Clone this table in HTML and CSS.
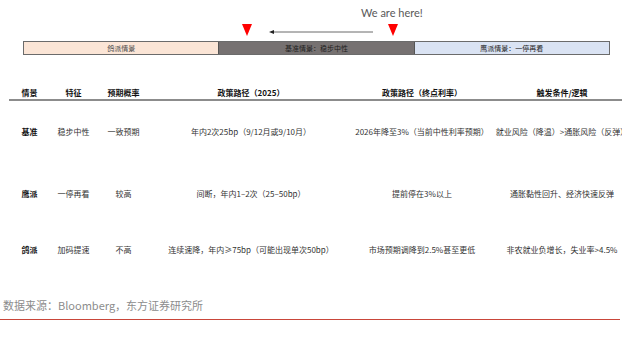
FILE: index.html
```html
<!DOCTYPE html>
<html lang="zh-CN">
<head>
<meta charset="utf-8">
<title>情景分析</title>
<link rel="stylesheet" href="styles.css">
</head>
<body>
<div class="page">
  <div class="here">We are here!</div>
  <div class="markers">
    <svg class="tri" width="10" height="12" viewBox="0 0 10 12"><polygon points="0,0 10,0 5,12" fill="#ff0000"/></svg>
    <svg class="arrow" width="105" height="14" viewBox="0 0 105 14"><line x1="4" y1="9" x2="104" y2="9" stroke="#6a6a6a" stroke-width="1"/><polygon points="0,9 5,7 5,11" fill="#222"/></svg>
    <svg class="tri tri2" width="10" height="12" viewBox="0 0 10 12"><polygon points="0,0 10,0 5,12" fill="#ff0000"/></svg>
  </div>
  <div class="bar">
    <div class="seg dove">鸽派情景</div>
    <div class="seg base">基准情景：稳步中性</div>
    <div class="seg hawk">鹰派情景：一停再看</div>
  </div>
  <div class="table">
    <div class="cell head">情景</div>
    <div class="cell head">特征</div>
    <div class="cell head">预期概率</div>
    <div class="cell head">政策路径（2025）</div>
    <div class="cell head">政策路径（终点利率）</div>
    <div class="cell head">触发条件/逻辑</div>

    <div class="cell key r1">基准</div>
    <div class="cell r1">稳步中性</div>
    <div class="cell r1">一致预期</div>
    <div class="cell r1">年内2次25bp（9/12月或9/10月）</div>
    <div class="cell r1">2026年降至3%（当前中性利率预期）</div>
    <div class="cell r1">就业风险（降温）&gt;通胀风险（反弹）</div>

    <div class="cell key r2">鹰派</div>
    <div class="cell r2">一停再看</div>
    <div class="cell r2">较高</div>
    <div class="cell r2">间断，年内1–2次（25–50bp）</div>
    <div class="cell r2">提前停在3%以上</div>
    <div class="cell r2">通胀黏性回升、经济快速反弹</div>

    <div class="cell key r3">鸽派</div>
    <div class="cell r3">加码提速</div>
    <div class="cell r3">不高</div>
    <div class="cell r3">连续速降，年内≥75bp（可能出现单次50bp）</div>
    <div class="cell r3">市场预期调降到2.5%甚至更低</div>
    <div class="cell r3">非农就业负增长，失业率&gt;4.5%</div>
  </div>
  <div class="source">数据来源：Bloomberg，东方证券研究所</div>
</div>
</body>
</html>
```

FILE: styles.css
```css
html, body {
  margin: 0;
  padding: 0;
  background: #ffffff;
}
body {
  font-family: "Noto Sans CJK SC", "Noto Sans", sans-serif;
  width: 627px;
  height: 342px;
  overflow: hidden;
}
.page {
  display: flex;
  flex-direction: column;
}
.here {
  padding-top: 6px;
  padding-left: 361px;
  height: 16px;
  line-height: 14px;
  font-family: "Lato", "Liberation Sans", sans-serif;
  font-size: 11px;
  color: #595959;
}
.markers {
  margin-top: 1px;
  height: 14px;
  display: flex;
  align-items: flex-start;
  padding-left: 242px;
}
.tri {
  display: block;
  margin-top: 1px;
}
.arrow {
  display: block;
  margin-left: 17px;
}
.tri2 {
  margin-left: 14px;
}
.bar {
  margin-top: 4px;
  margin-left: 23px;
  width: 587px;
  height: 14px;
  box-sizing: border-box;
  border: 1.5px solid #6b6b6b;
  display: flex;
}
.seg {
  flex: 1;
  display: flex;
  align-items: center;
  justify-content: center;
  font-size: 7px;
  line-height: 1;
  color: #4a4a4a;
}
.dove {
  background: #fbe5d6;
  border-right: 1px solid #555;
}
.base {
  background: #767171;
  color: #1e1e1e;
  border-right: 1px solid #555;
}
.hawk {
  background: #dae3f3;
  color: #222;
}
.table {
  margin-top: 32px;
  margin-left: 9px;
  width: 613px;
  overflow: hidden;
  display: grid;
  grid-template-columns: 41px 47px 53px 202px 140px 140px;
  grid-template-rows: 14px 62px 62px 50px;
  font-size: 8px;
  color: #333;
}
.cell {
  display: flex;
  align-items: center;
  justify-content: center;
  white-space: nowrap;
  line-height: 1;
}
.head {
  font-weight: 700;
  color: #111;
  border-bottom: 2px solid #8c8c8c;
}
.key {
  font-weight: 700;
  color: #111;
}
.source {
  margin-top: 23px;
  padding-left: 3px;
  height: 14px;
  line-height: 14px;
  padding-bottom: 7px;
  width: 617px;
  border-bottom: 1px solid #c9463a;
  font-size: 11px;
  color: #8c8c8c;
}
```
